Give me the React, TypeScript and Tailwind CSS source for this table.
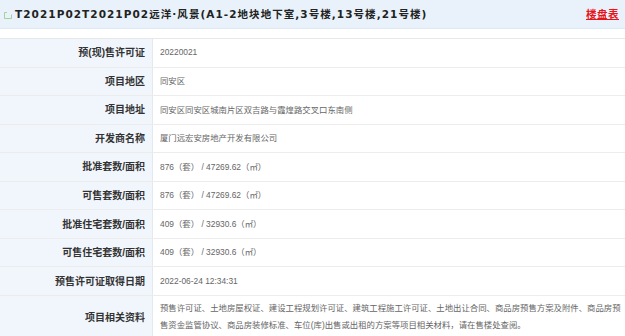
import React from 'react';

const rows: { label: string; value: React.ReactNode }[] = [
  { label: '预(现)售许可证', value: '20220021' },
  { label: '项目地区', value: '同安区' },
  { label: '项目地址', value: '同安区同安区城南片区双吉路与霞煌路交叉口东南侧' },
  { label: '开发商名称', value: '厦门远宏安房地产开发有限公司' },
  { label: '批准套数/面积', value: '876（套） / 47269.62（㎡）' },
  { label: '可售套数/面积', value: '876（套） / 47269.62（㎡）' },
  { label: '批准住宅套数/面积', value: '409（套） / 32930.6（㎡）' },
  { label: '可售住宅套数/面积', value: '409（套） / 32930.6（㎡）' },
  { label: '预售许可证取得日期', value: '2022-06-24 12:34:31' },
];

const font = { fontFamily: '"DejaVu Sans", "Noto Sans CJK SC", sans-serif' };

export default function App() {
  return (
    <main className="w-[625px] h-[336px] overflow-hidden bg-white" style={{ fontFamily: 'Arial, "Liberation Sans", "Noto Sans CJK SC", sans-serif' }}>
      <div className="flex items-center h-[29px] bg-[#e9f2fb] border-b border-[#dde9f5] pl-[4px] pr-[6px]">
        <svg width="8" height="8" viewBox="0 0 8 8" className="mr-[3px] mt-[2px]">
          <path d="M0.5 1.5 V7.5 H7.5 V3.5" fill="none" stroke="#9fd49a" strokeWidth="1" />
          <path d="M0.5 1.5 H3" fill="none" stroke="#9fd49a" strokeWidth="1" />
        </svg>
        <h1 className="text-[10.5px] font-bold text-[#222] tracking-[1.05px] mt-[2px]" style={font}>
          T2021P02T2021P02远洋·风景(A1-2地块地下室,3号楼,13号楼,21号楼)
        </h1>
        <a href="#" className="ml-auto mt-[2px] text-[10.5px] font-bold text-[#e8141a] underline tracking-[0.5px]">
          楼盘表
        </a>
      </div>

      <div className="mt-[9px] border-t border-[#e8e8e8]">
        {rows.map((r) => (
          <div key={r.label} className="flex h-[28.55px] border-b border-[#ececec]">
            <div className="w-[153px] shrink-0 bg-[#f1f6fd] border-r border-[#e4e9f0] flex items-center justify-end pr-[7px] text-[10px] font-bold text-[#333]">
              {r.label}
            </div>
            <div className="flex-1 flex items-center pl-[7px] text-[8.4px] text-[#666]">
              {r.value}
            </div>
          </div>
        ))}
        <div className="flex h-[48px]">
          <div className="w-[153px] shrink-0 bg-[#f1f6fd] border-r border-[#e4e9f0] flex items-center justify-end pr-[7px] pb-[4px] text-[10px] font-bold text-[#333]">
            项目相关资料
          </div>
          <div className="flex-1 pl-[7px] pr-[1px] pt-[4px] text-[8.4px] leading-[17px] text-[#666]">
            预售许可证、土地房屋权证、建设工程规划许可证、建筑工程施工许可证、土地出让合同、商品房预售方案及附件、商品房预售资金监管协议、商品房装修标准、车位(库)出售或出租的方案等项目相关材料，请在售楼处查阅。
          </div>
        </div>
      </div>
    </main>
  );
}
